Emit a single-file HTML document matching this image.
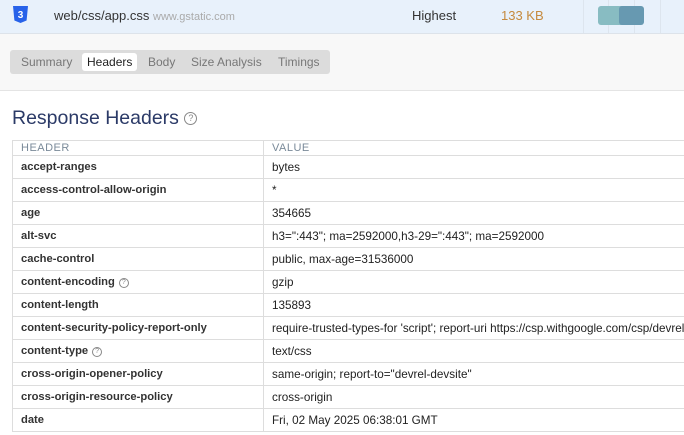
<!DOCTYPE html>
<html><head><style>
body{margin:0;width:684px;height:435px;overflow:hidden;font-family:"Liberation Sans",sans-serif;background:#fff;position:relative}
.top{position:absolute;left:0;top:0;width:684px;height:33px;background:#e8f1fb;border-bottom:1px solid #dde3ea}
.gray{position:absolute;left:0;top:34px;width:684px;height:56px;background:#f8f8f8;border-bottom:1px solid #e4e4e4}
.tabs{position:absolute;left:10px;top:50px;width:320px;height:24px;background:#dcdcdc;border-radius:3px}
.tab{position:absolute;top:4px;font-size:12px;color:#777;line-height:16px}
.tab.on{background:#fff;color:#222;border-radius:3px;padding:0 5px;top:3px;height:18px;line-height:18px}
h1{position:absolute;left:12px;top:107px;margin:0;font-weight:normal;font-size:19.5px;color:#2b3a67}
table{position:absolute;left:12px;top:140px;border-collapse:collapse;width:700px;font-size:11.7px}
td{border:1px solid #ddd;height:22px;padding:0 8px;color:#222}
td:first-child{width:234px;font-weight:bold;color:#333;font-size:11.2px}
tr.h td{height:14px;font-size:11px;color:#7a8a99;font-weight:normal;letter-spacing:.5px}
.q{display:inline-block;width:8px;height:8px;border:1px solid #888;border-radius:50%;font-size:7px;line-height:8px;text-align:center;color:#888;font-weight:normal;vertical-align:1px;margin-left:4px}
.v{position:absolute;top:0;width:1px;height:33px;background:#dde5ee}
</style></head><body>
<div class="top">
<svg style="position:absolute;left:13px;top:6px" width="15" height="17" viewBox="0 0 15 17"><path d="M0 0h15l-1.4 14.5L7.5 17 1.4 14.5z" fill="#2762e9"/><text x="7.5" y="12" font-size="10" font-weight="bold" fill="#fff" text-anchor="middle" font-family="Liberation Sans">3</text></svg>
<span style="position:absolute;left:54px;top:8px;font-size:13px;color:#333">web/css/app.css <span style="font-size:11px;color:#aaa">www.gstatic.com</span></span>
<span style="position:absolute;left:412px;top:8px;font-size:13px;color:#333">Highest</span>
<span style="position:absolute;left:501px;top:8px;font-size:13px;color:#c58a3e">133 KB</span>
<div class="v" style="left:583px"></div>
<div class="v" style="left:608px"></div>
<div class="v" style="left:634px"></div>
<div class="v" style="left:660px"></div>
<div style="position:absolute;left:598px;top:6px;width:25px;height:19px;background:#88bcc2;border-radius:3px 0 0 3px"></div>
<div style="position:absolute;left:619px;top:6px;width:25px;height:19px;background:#6799b1;border-radius:3px"></div>
</div>
<div class="gray"></div>
<div class="tabs">
<span class="tab" style="left:11px">Summary</span>
<span class="tab on" style="left:72px">Headers</span>
<span class="tab" style="left:138px">Body</span>
<span class="tab" style="left:181px">Size Analysis</span>
<span class="tab" style="left:268px">Timings</span>
</div>
<h1>Response Headers <span class="q" style="width:11px;height:11px;font-size:9px;line-height:11px;vertical-align:3px;margin-left:0">?</span></h1>
<table>
<tr class="h"><td style="font-weight:normal;color:#7a8a99;font-size:11px">HEADER</td><td>VALUE</td></tr>
<tr><td>accept-ranges</td><td>bytes</td></tr>
<tr><td>access-control-allow-origin</td><td>*</td></tr>
<tr><td>age</td><td>354665</td></tr>
<tr><td>alt-svc</td><td>h3=":443"; ma=2592000,h3-29=":443"; ma=2592000</td></tr>
<tr><td>cache-control</td><td>public, max-age=31536000</td></tr>
<tr><td>content-encoding<span class="q">?</span></td><td>gzip</td></tr>
<tr><td>content-length</td><td>135893</td></tr>
<tr><td>content-security-policy-report-only</td><td style="white-space:nowrap">require-trusted-types-for 'script'; report-uri https://csp.withgoogle.com/csp/devrel</td></tr>
<tr><td>content-type<span class="q">?</span></td><td>text/css</td></tr>
<tr><td>cross-origin-opener-policy</td><td>same-origin; report-to="devrel-devsite"</td></tr>
<tr><td>cross-origin-resource-policy</td><td>cross-origin</td></tr>
<tr><td>date</td><td>Fri, 02 May 2025 06:38:01 GMT</td></tr>
</table>
</body></html>
